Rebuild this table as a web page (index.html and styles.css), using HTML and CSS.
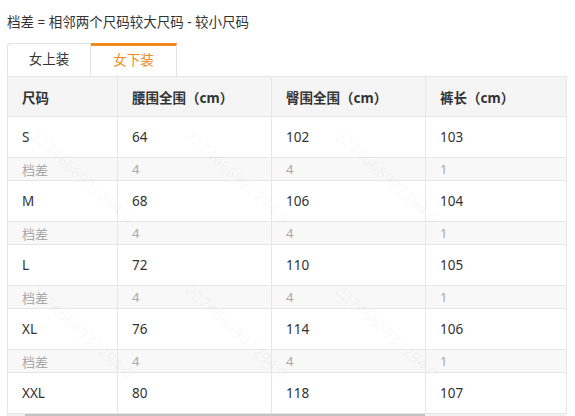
FILE: index.html
```html
<!DOCTYPE html>
<html lang="zh">
<head>
<meta charset="utf-8">
<link rel="stylesheet" href="styles.css">
</head>
<body>
<div class="page">
  <p class="note">档差 = 相邻两个尺码较大尺码 - 较小尺码</p>
  <div class="tabs">
    <div class="tab">女上装</div>
    <div class="tab active">女下装</div>
  </div>
  <div class="table-wrap">
    <table class="size-table">
      <colgroup>
        <col class="c1"><col class="c2"><col class="c3"><col class="c4">
      </colgroup>
      <thead>
        <tr><th>尺码</th><th>腰围全围（cm）</th><th>臀围全围（cm）</th><th>裤长（cm）</th></tr>
      </thead>
      <tbody>
        <tr class="big"><td>S</td><td>64</td><td>102</td><td>103</td></tr>
        <tr class="diff"><td>档差</td><td>4</td><td>4</td><td>1</td></tr>
        <tr class="big"><td>M</td><td>68</td><td>106</td><td>104</td></tr>
        <tr class="diff"><td>档差</td><td>4</td><td>4</td><td>1</td></tr>
        <tr class="big"><td>L</td><td>72</td><td>110</td><td>105</td></tr>
        <tr class="diff"><td>档差</td><td>4</td><td>4</td><td>1</td></tr>
        <tr class="big"><td>XL</td><td>76</td><td>114</td><td>106</td></tr>
        <tr class="diff"><td>档差</td><td>4</td><td>4</td><td>1</td></tr>
        <tr class="big"><td>XXL</td><td>80</td><td>118</td><td>107</td></tr>
      </tbody>
    </table>
    <div class="scrollbar"><div class="thumb"></div></div>
  </div>
  <div class="watermark">
    <span style="left:40px;top:125px">2274666937294 0</span>
    <span style="left:195px;top:125px">2274666937294 0</span>
    <span style="left:345px;top:125px">2274666937294 0</span>
    <span style="left:40px;top:280px">2274666937294 0</span>
    <span style="left:195px;top:280px">2274666937294 0</span>
    <span style="left:345px;top:280px">2274666937294 0</span>
  </div>
</div>
</body>
</html>
```

FILE: styles.css
```css
html, body {
  margin: 0;
  padding: 0;
  background: #fff;
}
body {
  font-family: "Noto Sans", "Noto Sans CJK SC", sans-serif;
  font-size: 13.5px;
  color: #333;
  overflow: hidden;
}
.page {
  position: relative;
  padding: 0 9px 0 7px;
  height: 416px;
  overflow: hidden;
}
.note {
  margin: 0;
  padding-top: 12px;
  height: 43px;
  box-sizing: border-box;
  line-height: 20px;
  font-size: 13.5px;
  color: #333;
}
.tabs {
  display: flex;
  height: 33px;
}
.tab {
  width: 84px;
  box-sizing: border-box;
  border: 1px solid #e3e3e3;
  border-bottom: none;
  border-radius: 4px 0 0 0;
  text-align: center;
  line-height: 31px;
  color: #333;
  background: #fff;
}
.tab.active {
  width: 86px;
  border-left: none;
  border-top: 3px solid #ef8a1f;
  border-radius: 0;
  color: #ef8a1f;
  line-height: 29px;
}
.table-wrap {
  width: 559px;
}
.size-table {
  width: 559px;
  border-collapse: collapse;
  table-layout: fixed;
}
.c1 { width: 110px; }
.c2 { width: 154px; }
.c3 { width: 154px; }
.c4 { width: 141px; }
.size-table th,
.size-table td {
  border: 1px solid #e6e6e6;
  padding: 0 0 0 14px;
  text-align: left;
  white-space: nowrap;
}
.size-table th {
  background: #f5f5f5;
  font-weight: bold;
  height: 39px;
  color: #333;
}
.size-table tr.big td {
  height: 40px;
  color: #333;
  background: #fff;
}
.size-table tr.diff td {
  height: 22px;
  color: #a8a8a8;
  background: #f8f8f8;
  font-size: 13px;
}
.scrollbar {
  height: 4px;
  background: #f1f1f1;
  position: relative;
}
.thumb {
  position: absolute;
  left: 18px;
  width: 400px;
  top: 0;
  height: 4px;
  background: #c2c2c2;
}
.watermark {
  position: absolute;
  inset: 0;
  pointer-events: none;
}
.watermark span {
  position: absolute;
  font-size: 15px;
  color: rgba(0, 0, 0, 0.045);
  transform-origin: 0 0;
  transform: rotate(42deg);
  white-space: nowrap;
  letter-spacing: 0.5px;
}
```
